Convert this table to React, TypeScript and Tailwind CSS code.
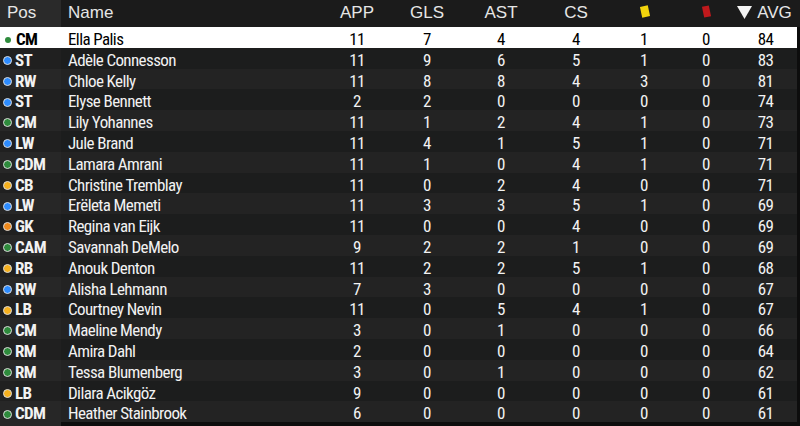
import React from "react";

type Player = {
  pos: string;
  name: string;
  app: number;
  gls: number;
  ast: number;
  cs: number;
  yc: number;
  rc: number;
  avg: number;
};

const players: Player[] = [
  { pos: "CM", name: "Ella Palis", app: 11, gls: 7, ast: 4, cs: 4, yc: 1, rc: 0, avg: 84 },
  { pos: "ST", name: "Adèle Connesson", app: 11, gls: 9, ast: 6, cs: 5, yc: 1, rc: 0, avg: 83 },
  { pos: "RW", name: "Chloe Kelly", app: 11, gls: 8, ast: 8, cs: 4, yc: 3, rc: 0, avg: 81 },
  { pos: "ST", name: "Elyse Bennett", app: 2, gls: 2, ast: 0, cs: 0, yc: 0, rc: 0, avg: 74 },
  { pos: "CM", name: "Lily Yohannes", app: 11, gls: 1, ast: 2, cs: 4, yc: 1, rc: 0, avg: 73 },
  { pos: "LW", name: "Jule Brand", app: 11, gls: 4, ast: 1, cs: 5, yc: 1, rc: 0, avg: 71 },
  { pos: "CDM", name: "Lamara Amrani", app: 11, gls: 1, ast: 0, cs: 4, yc: 1, rc: 0, avg: 71 },
  { pos: "CB", name: "Christine Tremblay", app: 11, gls: 0, ast: 2, cs: 4, yc: 0, rc: 0, avg: 71 },
  { pos: "LW", name: "Erëleta Memeti", app: 11, gls: 3, ast: 3, cs: 5, yc: 1, rc: 0, avg: 69 },
  { pos: "GK", name: "Regina van Eijk", app: 11, gls: 0, ast: 0, cs: 4, yc: 0, rc: 0, avg: 69 },
  { pos: "CAM", name: "Savannah DeMelo", app: 9, gls: 2, ast: 2, cs: 1, yc: 0, rc: 0, avg: 69 },
  { pos: "RB", name: "Anouk Denton", app: 11, gls: 2, ast: 2, cs: 5, yc: 1, rc: 0, avg: 68 },
  { pos: "RW", name: "Alisha Lehmann", app: 7, gls: 3, ast: 0, cs: 0, yc: 0, rc: 0, avg: 67 },
  { pos: "LB", name: "Courtney Nevin", app: 11, gls: 0, ast: 5, cs: 4, yc: 1, rc: 0, avg: 67 },
  { pos: "CM", name: "Maeline Mendy", app: 3, gls: 0, ast: 1, cs: 0, yc: 0, rc: 0, avg: 66 },
  { pos: "RM", name: "Amira Dahl", app: 2, gls: 0, ast: 0, cs: 0, yc: 0, rc: 0, avg: 64 },
  { pos: "RM", name: "Tessa Blumenberg", app: 3, gls: 0, ast: 1, cs: 0, yc: 0, rc: 0, avg: 62 },
  { pos: "LB", name: "Dilara Acikgöz", app: 9, gls: 0, ast: 0, cs: 0, yc: 0, rc: 0, avg: 61 },
  { pos: "CDM", name: "Heather Stainbrook", app: 6, gls: 0, ast: 0, cs: 0, yc: 0, rc: 0, avg: 61 },
];

// colour of the little position dot
function dotColor(pos: string) {
  if (["ST", "RW", "LW"].includes(pos)) return "bg-[#2d8cff]";
  if (pos === "GK") return "bg-[#f08a1c]";
  if (["CB", "RB", "LB"].includes(pos)) return "bg-[#f5b01e]";
  return "bg-[#2e8b3c]";
}

const cols = "grid grid-cols-[61px_261px_70px_70px_78px_72px_68px_54px_63px]";

export default function App() {
  return (
    <div className="w-[800px] h-[426px] bg-[#0d0d0d] overflow-hidden font-['Liberation_Sans_Narrow','Roboto_Condensed','Liberation_Sans',sans-serif]">
      <div className={`${cols} h-[27px] bg-[#1b1b1b] text-[#e6e6e6] text-[17px] items-center font-['Liberation_Sans',Arial,sans-serif]`}>
        <div className="h-full flex items-center pl-[7px] pb-[2px] bg-[#2a2a2a]">Pos</div>
        <div className="pl-[7px] pb-[2px]">Name</div>
        <div className="text-center pb-[2px]">APP</div>
        <div className="text-center pb-[2px]">GLS</div>
        <div className="text-center pb-[2px]">AST</div>
        <div className="text-center pb-[2px]">CS</div>
        <div className="flex justify-center pr-[2px] pb-[4px]">
          <div className="w-[8px] h-[11px] bg-[#f2d40c] rotate-[-12deg]" />
        </div>
        <div className="flex justify-center pr-[2px] pb-[4px]">
          <div className="w-[7px] h-[11px] bg-[#c0191c] rotate-[-12deg]" />
        </div>
        <div className="flex items-center justify-center gap-[5px] pr-[2px] pb-[2px]">
          <svg width="15" height="13" viewBox="0 0 15 13">
            <path d="M0 0 H15 L7.5 13 Z" fill="#f2f2f2" />
          </svg>
          <span>AVG</span>
        </div>
      </div>

      <div className="pr-[3px]">
        {players.map((p, i) => {
          const sel = i === 0;
          const rowBg = sel ? "bg-white" : i % 2 === 1 ? "bg-[#1c1d1d]" : "bg-[#232323]";
          const posBg = sel ? "bg-white" : i % 2 === 1 ? "bg-[#202020]" : "bg-[#272727]";
          const txt = sel ? "text-black" : "text-[#f2f2f2]";
          return (
            <div key={i} className={`${cols} h-[20.8px] items-center text-[17px] tracking-[-0.6px] ${rowBg} ${txt}`}>
              <div className={`h-full flex items-center gap-[3px] pl-[3px] ${posBg}`}>
                {sel ? (
                  <span className="w-[6px] h-[6px] rounded-full bg-[#2e8b3c] mx-[2px]" />
                ) : (
                  <span className={`w-[9px] h-[9px] rounded-full border border-[#dcdcdc] ${dotColor(p.pos)}`} />
                )}
                <span className="font-bold">{p.pos}</span>
              </div>
              <div className="pl-[7px] whitespace-nowrap">{p.name}</div>
              <div className="text-center">{p.app}</div>
              <div className="text-center">{p.gls}</div>
              <div className="text-center">{p.ast}</div>
              <div className="text-center">{p.cs}</div>
              <div className="text-center pr-[4px]">{p.yc}</div>
              <div className="text-center pr-[2px]">{p.rc}</div>
              <div className="text-center">{p.avg}</div>
            </div>
          );
        })}
      </div>
    </div>
  );
}
